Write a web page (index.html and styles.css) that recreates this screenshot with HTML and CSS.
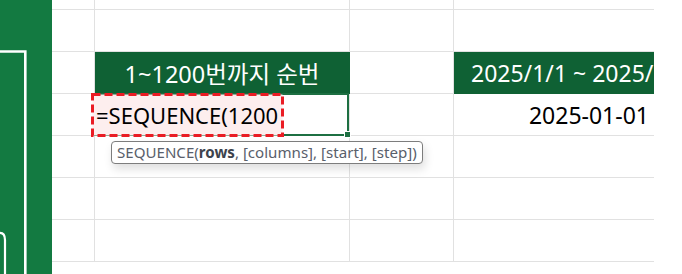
FILE: index.html
```html
<!DOCTYPE html>
<html lang="ko">
<head>
<meta charset="utf-8">
<link rel="stylesheet" href="styles.css">
</head>
<body>
<div class="page">
  <div class="panel">
    <svg class="panel-art" width="52" height="274" viewBox="0 0 52 274">
      <path d="M0 51.5 H25.3 V274" fill="none" stroke="#ffffff" stroke-width="2.6"/>
      <path d="M0 232.8 Q5 232.8 5 240 V274" fill="none" stroke="#ffffff" stroke-width="2.2"/>
    </svg>
  </div>
  <div class="sheet">
    <div class="cell"></div><div class="cell"></div><div class="cell"></div><div class="cell last"></div>
    <div class="cell"></div><div class="cell"></div><div class="cell"></div><div class="cell last"></div>
    <div class="cell"></div>
    <div class="cell head head-b">1~1200번까지 순번</div>
    <div class="cell"></div>
    <div class="cell last head head-d">2025/1/1 ~ 2025/12/31</div>
    <div class="cell"></div>
    <div class="cell active">
      <svg class="mark" width="193" height="44" viewBox="0 0 193 44">
        <rect x="1.5" y="1.5" width="190" height="41" fill="#fdeeee" stroke="#ea1c24" stroke-width="3" stroke-dasharray="8 4"/>
      </svg>
      <div class="sel"><span class="handle"></span></div>
      <span class="formula">=SEQUENCE(1200</span>
      <div class="tip">SEQUENCE(<b>rows</b>, [columns], [start], [step])</div>
    </div>
    <div class="cell"></div>
    <div class="cell last date">2025-01-01</div>
    <div class="cell"></div><div class="cell"></div><div class="cell"></div><div class="cell last"></div>
    <div class="cell"></div><div class="cell"></div><div class="cell"></div><div class="cell last"></div>
    <div class="cell"></div><div class="cell"></div><div class="cell"></div><div class="cell last"></div>
  </div>
</div>
</body>
</html>
```
FILE: styles.css
```css
html, body {
  margin: 0;
  padding: 0;
  background: #ffffff;
  overflow: hidden;
}
.page {
  display: flex;
  width: 682px;
  height: 274px;
  font-family: "Noto Sans", "Noto Sans CJK KR", sans-serif;
}
.panel {
  width: 52px;
  height: 274px;
  background: #137a41;
  flex: none;
}
.panel-art {
  display: block;
}
.sheet {
  display: grid;
  grid-template-columns: 43px 255px 104px 200px;
  grid-template-rows: 10px repeat(6, 42px);
  align-content: start;
}
.cell {
  box-sizing: border-box;
  border-right: 1px solid #e1e1e1;
  border-bottom: 1px solid #e1e1e1;
  display: flex;
  align-items: center;
  white-space: nowrap;
  font-size: 23px;
  color: #000;
}
.cell.last {
  border-right: none;
}
.head {
  background: #0f6134;
  border-color: #0f6134;
  color: #ffffff;
  overflow: hidden;
}
.head-b {
  justify-content: center;
  font-size: 23.5px;
}
.head-d {
  padding-left: 17px;
  border-bottom-color: #0f6134;
}
.date {
  justify-content: flex-end;
  padding-right: 5px;
}
.active {
  position: relative;
  padding-left: 1px;
  font-size: 22px;
}
.formula {
  position: relative;
  z-index: 2;
}
.mark {
  position: absolute;
  left: -4px;
  top: -1px;
  display: block;
  z-index: 1;
}
.sel {
  position: absolute;
  left: -1px;
  top: -1px;
  width: 255px;
  height: 43px;
  box-sizing: border-box;
  border: 2px solid #1d6f42;
  z-index: 0;
}
.handle {
  position: absolute;
  right: -4px;
  bottom: -4px;
  width: 5px;
  height: 5px;
  background: #1d6f42;
  border: 1px solid #ffffff;
}
.tip {
  position: absolute;
  left: 16px;
  top: 47px;
  height: 23px;
  box-sizing: border-box;
  padding: 0 5px;
  border: 1px solid #7d7d7d;
  border-radius: 4px;
  background: #ffffff;
  box-shadow: 2px 5px 10px rgba(0, 0, 0, 0.13);
  font-size: 15.1px;
  line-height: 21px;
  color: #59606b;
  z-index: 3;
}
.tip b {
  color: #3d434c;
}
```
